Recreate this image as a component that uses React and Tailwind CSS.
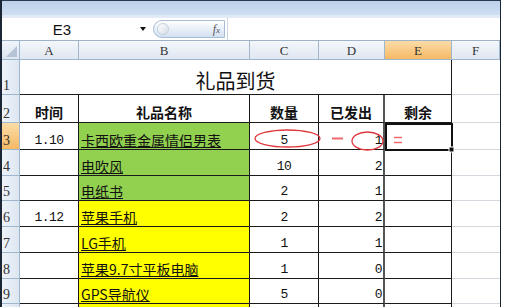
const CJK = { fontFamily: '"Noto Sans CJK SC", "Noto Sans", sans-serif' };
const MONO = { fontFamily: '"Liberation Mono", "Noto Sans CJK SC", monospace' };
const SERIF = { fontFamily: '"Liberation Serif", "DejaVu Serif", serif' };

const cols = ["A", "B", "C", "D", "E", "F"];
const rowHeights = [35, 28, 27, 26, 25, 26, 26, 26, 25, 20];

const rows = [
  { time: "1.10", name: "卡西欧重金属情侣男表", qty: "5", sent: "1", fill: "bg-[#92d050]" },
  { time: "", name: "电吹风", qty: "10", sent: "2", fill: "bg-[#92d050]" },
  { time: "", name: "电纸书", qty: "2", sent: "1", fill: "bg-[#92d050]" },
  { time: "1.12", name: "苹果手机", qty: "2", sent: "2", fill: "bg-[#ffff00]" },
  { time: "", name: "LG手机", qty: "1", sent: "1", fill: "bg-[#ffff00]" },
  { time: "", name: "苹果9.7寸平板电脑", qty: "1", sent: "0", fill: "bg-[#ffff00]" },
  { time: "", name: "GPS导航仪", qty: "5", sent: "0", fill: "bg-[#ffff00]" },
  { time: "", name: "", qty: "", sent: "", fill: "bg-[#ffff00]" },
];

function RowHead({ n, active }) {
  return (
    <div
      className={`flex items-end border-b border-r border-[#9eb6ce] pb-[1px] pl-[1px] text-[14px] leading-none text-[#333] ${
        active
          ? "bg-gradient-to-b from-[#fbdca6] to-[#f5b963]"
          : "bg-gradient-to-r from-[#eef3fa] to-[#dde6f1]"
      }`}
      style={SERIF}
    >
      {n}
    </div>
  );
}

function Cell({ children, className = "", style }) {
  return (
    <div
      className={`flex items-end overflow-hidden whitespace-nowrap border-b border-r border-[#1a1a1a] pb-[2px] text-[13px] leading-none text-[#111] ${className}`}
      style={style}
    >
      {children}
    </div>
  );
}

function FCell() {
  return <div className="border-b border-[#d4d8de] bg-white" />;
}

export default function App() {
  return (
    <div className="relative h-[307px] w-[506px] overflow-hidden bg-white">
      <div className="h-[307px] w-[501px] border-l-2 border-r border-[#1b2636]">
        {/* window strip */}
        <div className="h-[15px] border-t border-[#2a3a50] bg-gradient-to-b from-[#bcd1eb] to-[#cfdff2]" />
        <div className="h-[3px] bg-[#e1eaf5]" />

        {/* formula bar */}
        <div className="flex h-[23px] items-center border-b border-[#9eb2c8] bg-white">
          <div className="w-[120px] text-center text-[15px] leading-none text-[#111]" style={{ fontFamily: '"Liberation Sans", Arial, sans-serif' }}>
            E3
          </div>
          <div className="ml-[18px] h-0 w-0 border-x-[3px] border-t-[4px] border-x-transparent border-t-[#111]" />
          <div className="ml-[7px] flex h-[18px] w-[72px] items-center rounded-l-full border border-[#a8bcd6] bg-gradient-to-b from-[#ffffff] to-[#d2e0f1] pl-[3px] pr-[4px]">
            <div className="h-[12px] w-[12px] rounded-full border border-[#c3cfdc] bg-gradient-to-br from-[#ffffff] to-[#d6dde6]" />
            <span className="ml-auto text-[12px] italic leading-none text-[#555]" style={SERIF}>
              f<span className="text-[9px]">x</span>
            </span>
          </div>
          <div className="ml-[2px] h-full flex-1 border-l border-[#c9d5e3]" />
        </div>

        {/* sheet grid */}
        <div
          className="grid"
          style={{
            gridTemplateColumns: "18px 59px 171px 69px 66px 67px 48px",
            gridTemplateRows: `19px ${rowHeights.map((h) => h + "px").join(" ")}`,
          }}
        >
          {/* column headers */}
          <div className="relative border-b border-r border-[#9eb6ce] bg-gradient-to-b from-[#f1f5fa] to-[#dce5f0]">
            <svg className="absolute bottom-[2px] right-[2px]" width="11" height="11" viewBox="0 0 11 11">
              <polygon points="11,0 11,11 0,11" fill="#b4c3d6" />
            </svg>
          </div>
          {cols.map((c) => (
            <div
              key={c}
              className={`flex items-center justify-center border-b border-r border-[#9eb6ce] text-[13px] leading-none text-[#333] ${
                c === "E"
                  ? "bg-gradient-to-b from-[#fbdca6] to-[#f5b963]"
                  : "bg-gradient-to-b from-[#f4f7fb] to-[#dfe7f1]"
              }`}
              style={SERIF}
            >
              {c}
            </div>
          ))}

          {/* row 1 */}
          <RowHead n="1" />
          <Cell className="col-span-5 justify-center pb-[3px] text-[20px]" style={CJK}>
            礼品到货
          </Cell>
          <FCell />

          {/* row 2 */}
          <RowHead n="2" />
          {["时间", "礼品名称", "数量", "已发出", "剩余"].map((t, i) => (
            <Cell
              key={t}
              className={`justify-center pb-[3px] text-[14px] font-bold ${i === 3 ? "border-r-2 border-r-[#555]" : ""}`}
              style={CJK}
            >
              {t}
            </Cell>
          ))}
          <FCell />

          {rows.map((r, i) => (
            <div key={i} className="contents">
              <RowHead n={i < 7 ? i + 3 : ""} active={i === 0} />
              <Cell className="justify-center tracking-[-0.6px]" style={MONO}>
                {r.time}
              </Cell>
              <Cell className={`${r.fill} pl-[2px] text-[14px]`} style={CJK}>
                <span className="underline decoration-1 underline-offset-[1px]">{r.name}</span>
              </Cell>
              <Cell className="justify-center tracking-[-0.6px]" style={MONO}>
                {r.qty}
              </Cell>
              <Cell className="justify-end border-r-2 border-r-[#555] pr-[1px] tracking-[-0.6px]" style={MONO}>
                {r.sent}
              </Cell>
              <Cell />
              <FCell />
            </div>
          ))}
        </div>
      </div>

      {/* hand-drawn marks and selection */}
      <svg className="pointer-events-none absolute left-0 top-0" width="506" height="307">
        <ellipse cx="287.5" cy="138.5" rx="32.5" ry="8.5" fill="none" stroke="#e0383e" strokeWidth="1.3" />
        <ellipse cx="367.5" cy="141" rx="15.5" ry="9" fill="none" stroke="#e0383e" strokeWidth="1.3" />
        <line x1="332" y1="138.5" x2="343" y2="138.5" stroke="#ef6a6e" strokeWidth="2" />
        <line x1="394" y1="137.5" x2="402" y2="137.5" stroke="#ef6a6e" strokeWidth="1.5" />
        <line x1="394" y1="142.5" x2="402" y2="142.5" stroke="#ef6a6e" strokeWidth="1.5" />
        <rect x="386" y="124" width="66" height="26" fill="none" stroke="#111" strokeWidth="2" />
        <rect x="449" y="147" width="5" height="5" fill="#111" stroke="#fff" strokeWidth="1" />
      </svg>
    </div>
  );
}
